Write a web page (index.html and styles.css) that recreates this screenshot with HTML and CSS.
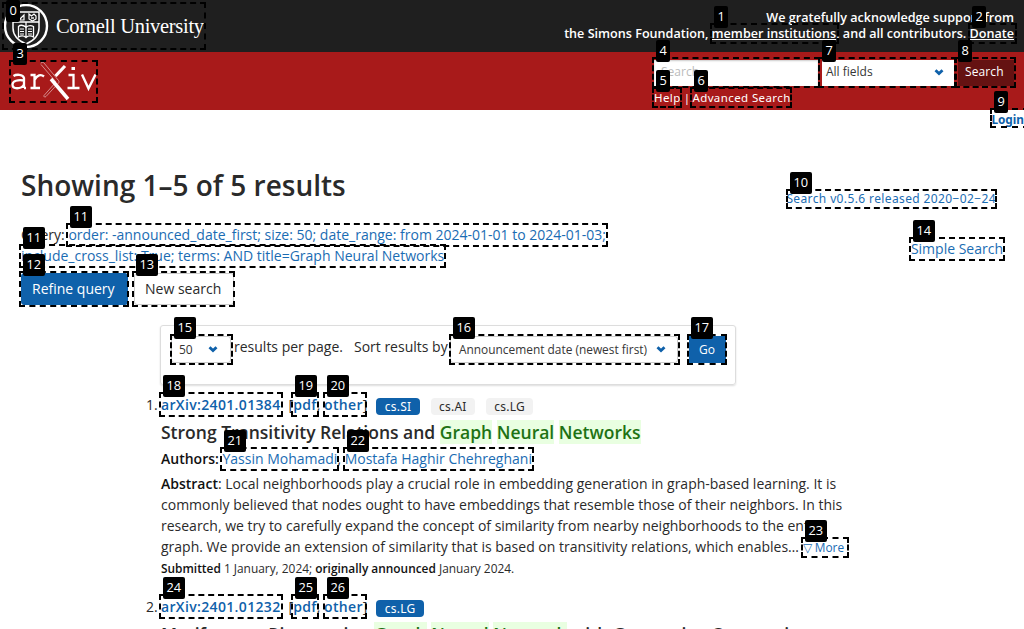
FILE: index.html
```html
<!DOCTYPE html>
<html lang="en">
<head>
<meta charset="utf-8">
<title>Search | arXiv e-print repository</title>
<link rel="stylesheet" href="styles.css">
</head>
<body>
<header>
  <div class="topbar">
    <a class="cornell">
      <svg class="seal" width="46" height="46" viewBox="0 0 46 46" fill="none" stroke="#fff">
        <circle cx="23" cy="23" r="21" stroke-width="2.4"/>
        <path d="M10 9H36V25C36 33 30 38 23 41C16 38 10 33 10 25Z" stroke-width="1.5"/>
        <path d="M10 19H36M23 19V25" stroke-width="1.3"/>
        <path d="M23 24C20 22 17 22 15.500 23.500V34C18 32.500 21 32.500 23 34.500C25 32.500 28 32.500 30.500 34V23.500C28 22 26 22 23 24V34" stroke-width="1.3"/>
        <path d="M17 26H21M17 28.500H21M17 31H21M25 26H29M25 28.500H29M25 31H29" stroke-width="1"/>
        <path d="M26 11L28.500 13L31 11L33 13V16L29.500 18L26 16ZM14 12L17 16L21 12V17H14Z" stroke-width="1.2"/>
        <path d="M28 15H31" stroke-width="1.400"/>
      </svg>
      <span class="cu">Cornell University</span>
    </a>
    <div class="ack"><p class="a1">We gratefully acknowledge support from</p><p class="a2">the Simons Foundation, <u>member institutions</u>. and all contributors. <u>Donate</u></p></div>
  </div>
  <div class="redbar">
    <svg class="arxiv" width="86" height="40" viewBox="0 0 86 40" fill="none" stroke="#fff">
      <path d="M2.500 14C5 12.300 12 11.800 13 16V26M13 18.500C7 17.500 1.500 18.800 1.500 22.500C1.500 27.500 10 27.500 13 22.500M13 26H15" stroke-width="2.300"/>
      <path d="M19.500 13H23.500V26M19.500 26H29M23.500 18C26 13 30 12 33 14.500" stroke-width="2.300"/>
      <path d="M54 4L44.500 14" stroke-width="3.200"/>
      <path d="M40 17L57 37" stroke-width="3.500"/>
      <path d="M30 1.500C30 0 32 0 33 1L47.500 18.500C48.500 20 48 20.500 47 21.500L35 34.500C34 35.500 32.500 35 33 33.500L45 20L30 2.500" stroke-width=".5"/>
      <path d="M57.500 13H62.500V26M56.500 26H68.500" stroke-width="2.300"/>
      <path d="M60.500 6.500H64" stroke-width="3"/>
      <path d="M71 12.500L77.500 26.500L84.500 12.500" stroke-width="2.400"/>
    </svg>
    <div class="mini">
      <div class="fields">
        <span class="input">Search...</span>
        <span class="sel all">All fields<svg class="chev" width="10" height="7" viewBox="0 0 10 7"><path d="M1.500 1.200L5 4.600L8.500 1.200"/></svg></span>
        <span class="sbtn">Search</span>
      </div>
      <div class="help"><span class="h1a">Help</span><span class="bar">|</span><span class="h2a">Advanced Search</span></div>
    </div>
  </div>
  <div class="login"><a>Login</a></div>
</header>
<main>
  <div class="head">
    <h1>Showing 1–5 of 5 results</h1>
    <a class="ver">Search v0.5.6 released 2020−02−24</a>
  </div>
  <div class="queryrow">
    <div class="query">Query: <a>order: -announced_date_first; size: 50; date_range: from 2024-01-01 to 2024-01-03;<br>include_cross_list: True; terms: AND title=Graph Neural Networks</a></div>
    <a class="simple">Simple Search</a>
  </div>
  <div class="buttons"><span class="btn blue">Refine query</span><span class="btn">New search</span></div>
  <div class="sortbox">
    <span class="sel n50">50<svg class="chev" width="10" height="7" viewBox="0 0 10 7"><path d="M1.500 1.200L5 4.600L8.500 1.200"/></svg></span>
    <span class="t1">results per page.</span><span class="t2">Sort results by</span>
    <span class="sel ann">Announcement date (newest first)<svg class="chev" width="10" height="7" viewBox="0 0 10 7"><path d="M1.500 1.200L5 4.600L8.500 1.200"/></svg></span>
    <span class="go">Go</span>
  </div>
  <article class="result first">
    <div class="idrow"><span class="num">1.</span><b class="aid">arXiv:2401.01384</b><span class="fmt">[<b>pdf</b>, <b>other</b>]</span><span class="tag prim">cs.SI</span><span class="tag">cs.AI</span><span class="tag">cs.LG</span></div>
    <h2>Strong Transitivity Relations and <mark>Graph</mark> <mark>Neural</mark> <mark>Networks</mark></h2>
    <p class="authors"><strong>Authors:</strong> <a>Yassin Mohamadi</a>, <a class="au2">Mostafa Haghir Chehreghani</a></p>
    <p class="abs"><strong>Abstract</strong>: Local neighborhoods play a crucial role in embedding generation in graph-based learning. It is<br>commonly believed that nodes ought to have embeddings that resemble those of their neighbors. In this<br>research, we try to carefully expand the concept of similarity from nearby neighborhoods to the entire<br>graph. We provide an extension of similarity that is based on transitivity relations, which enables… <a class="more">▽ More</a></p>
    <p class="sub"><strong>Submitted</strong> 1 January, 2024; <strong>originally announced</strong> January 2024.</p>
  </article>
  <article class="result last">
    <div class="idrow"><span class="num">2.</span><b class="aid">arXiv:2401.01232</b><span class="fmt">[<b>pdf</b>, <b>other</b>]</span><span class="tag prim">cs.LG</span></div>
    <h2>Motif-aware Riemannian <mark>Graph</mark> <mark>Neural</mark> <mark>Network</mark> with Generative-Contrastive</h2>
  </article>
</main>
<div class="marks" id="marks"></div>
<script src="marks.js"></script>
</body>
</html>
```
FILE: marks.js
```js
// Numbered outlines for each interactive region: label, left, top, right, bottom.
const regions = [
  [0, 2, 2, 206, 50], [1, 710, 23, 839, 44], [2, 968, 23, 1017, 44],
  [3, 9, 60, 98, 103], [4, 652, 57, 820, 88], [5, 652, 87, 682, 108],
  [6, 690, 87, 792, 108], [7, 818, 57, 957, 88], [8, 954, 57, 1016, 88],
  [9, 990, 108, 1029, 128], [10, 786, 189, 997, 209],
  [11, 66, 223, 608, 247], [11, 19, 244, 446, 268],
  [12, 19, 271, 129, 307], [13, 132, 271, 235, 307], [14, 909, 237, 1005, 261],
  [15, 170, 334, 233, 365], [16, 449, 334, 680, 365], [17, 687, 334, 727, 365],
  [18, 159, 392, 283, 417], [19, 291, 392, 319, 417], [20, 323, 392, 367, 417],
  [21, 220, 447, 339, 471], [22, 343, 447, 534, 471], [23, 801, 537, 849, 558],
  [24, 159, 594, 283, 619], [25, 291, 594, 319, 619], [26, 323, 594, 367, 619]
];
const layer = document.getElementById("marks");
function add(cls, x, y) {
  const el = document.createElement("div");
  el.className = cls;
  el.style.left = x + "px";
  el.style.top = y + "px";
  layer.appendChild(el);
  return el;
}
for (const [, l, t, r, b] of regions) {
  const box = add("box", l, t);
  box.style.width = r - l + "px";
  box.style.height = b - t + "px";
}
for (const [n, l, t] of regions) {
  add("label", l + 4, Math.max(0, t - 17)).textContent = n;
}
```
FILE: styles.css
```css
* { box-sizing: border-box; }
html { overflow: hidden; }
body { margin: 0; width: 1024px; height: 629px; overflow: hidden; position: relative; background: #fff; color: #2a2a2a; font: 14px/21px "Open Sans", "Noto Sans", sans-serif; }
p, h1, h2 { margin: 0; }
a { color: #1a6cb3; }
strong, b { font-weight: 600; }
strong { color: #111; }
.topbar { height: 52px; background: #1f1f1f; display: flex; justify-content: space-between; padding: 3px 10px 0 3px; }
.cornell { display: flex; color: #fff; }
.cu { font: 20.5px/46px "Palatino Linotype", Palatino, "Liberation Serif", serif; letter-spacing: -.3px; margin-left: 7px; white-space: nowrap; }
.ack { color: #fff; font-weight: 600; font-size: 12.6px; line-height: 16px; text-align: right; padding-top: 7px; white-space: nowrap; }
.redbar { height: 58px; background: #a81a1a; display: flex; justify-content: space-between; padding: 8px 10px 0 11px; }
.arxiv { margin-top: 2px; }
.mini { width: 360px; }
.fields { display: flex; height: 26px; font-size: 12px; line-height: 24px; }
.input { width: 164px; background: #fff; color: #bbb; padding-left: 7px; margin-right: 4px; box-shadow: inset 0 1px 2px #ccc; }
.sel { display: flex; align-items: center; justify-content: space-between; background: #fff; color: #363636; font-size: 12px; }
.chev { fill: none; stroke: #0f61aa; stroke-width: 2.8; flex: none; }
.all { width: 132px; padding: 0 10px 2px 4px; margin-right: 4px; }
.sbtn { width: 56px; background: #651212; color: #fff; padding-left: 7px; letter-spacing: .1px; }
.help { display: flex; color: #fff; font: 11.5px/22px "Noto Sans", sans-serif; letter-spacing: .4px; white-space: nowrap; padding-top: 1px; }
.bar { margin: 0 2px 0 3px; }
.login { height: 19px; text-align: right; font: bold 11.8px/19px "Noto Sans", sans-serif; }
.login a { color: #0f61aa; }
main { padding: 38px 20px 0 21px; }
.head { display: flex; justify-content: space-between; height: 57px; }
h1 { font-size: 28px; font-weight: 600; line-height: 37px; white-space: nowrap; }
.ver { font: 12px/19px "Noto Sans", sans-serif; letter-spacing: .38px; margin: 22px 8px 0 0; white-space: nowrap; }
.queryrow { display: flex; justify-content: space-between; height: 49px; white-space: nowrap; }
.simple { margin-top: 14px; margin-right: 1px; }
.buttons { display: flex; gap: 6px; height: 32px; }
.btn { width: 100px; border: 1px solid #ccc; border-radius: 3px; padding-left: 10px; line-height: 29px; }
.blue { width: 107px; background: #0f61aa; color: #fff; border-color: #0f61aa; }
.sortbox { display: flex; margin: 20px 0 0 139px; width: 576px; height: 60px; padding: 10px 10px 0; border: 1px solid #ddd; border-radius: 3px; box-shadow: 0 1px 2px #ddd; white-space: nowrap; }
.n50, .ann { height: 27px; border: 1px solid #ccc; border-radius: 3px; padding: 0 12px 1px 7px; }
.n50 { width: 60px; margin-right: 3px; }
.ann { width: 228px; margin-right: 11px; margin-left: auto; padding-left: 8px; padding-right: 11px; font-size: 11.9px; }
.t2 { margin-left: 11px; }
.go { width: 37px; height: 27px; background: #0f61aa; color: #fff; padding-left: 10px; font-size: 12px; line-height: 27px; margin-right: -1px; }
.result { margin-left: 140px; height: 202px; white-space: nowrap; }
.first { margin-top: 9px; }
.last { height: 39px; }
.idrow { display: flex; align-items: center; height: 21px; }
.num { width: 15px; margin-left: -15px; flex: none; }
.idrow b { color: #0f61aa; letter-spacing: .35px; }
.fmt { margin-left: 8px; margin-right: 9px; }
.tag { font: 12px/17px "Noto Sans", sans-serif; letter-spacing: .25px; background: #f2f2f2; border-radius: 4px; padding: 0 8.3px; margin-right: 11px; margin-top: 3px; }
.prim { background: #0f61aa; color: #fff; }
h2 { font-size: 17.5px; font-weight: 600; line-height: 24px; margin-top: 5px; }
mark { background: #e9ffe1; color: #1e7214; }
.authors { margin-top: 4px; }
.abs { margin-top: 4px; }
.more, .sub { font-size: 11.9px; }
.box { position: absolute; border: 2px dashed #000; }
.label { position: absolute; height: 22px; padding: 0 3.5px; background: #000; color: #fff; border-radius: 2px; font: 12.8px/21px "Open Sans", sans-serif; }
```
